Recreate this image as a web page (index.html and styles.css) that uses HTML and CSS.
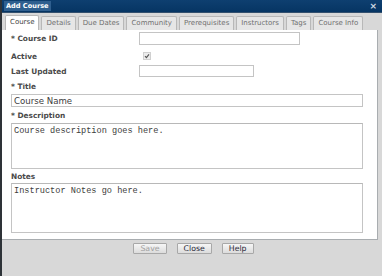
FILE: index.html
```html
<!DOCTYPE html>
<html lang="en">
<head>
    <meta charset="UTF-8">
    <title>Add Course</title>
    <link rel="stylesheet" href="styles.css">
</head>
<body>

    <div class="dialog">
        <div class="titlebar">
            <span class="title">Add Course</span>
            <span class="close">&times;</span>
        </div>

        <!-- tab strip -->
        <div class="tabs">
            <div class="tab active">Course</div>
            <div class="tab">Details</div>
            <div class="tab">Due Dates</div>
            <div class="tab">Community</div>
            <div class="tab">Prerequisites</div>
            <div class="tab">Instructors</div>
            <div class="tab">Tags</div>
            <div class="tab">Course Info</div>
        </div>

        <div class="panel">
            <div class="row row-id">
                <label class="label">* Course ID</label>
                <input type="text" class="field field-id">
            </div>
            <div class="row row-active">
                <label class="label">Active</label>
                <span class="check">
                    <svg width="6" height="6" viewBox="0 0 6 6"><path d="M1 3.2 L2.4 4.6 L5 1.4" fill="none" stroke="#555" stroke-width="1.1"/></svg>
                </span>
            </div>
            <div class="row row-updated">
                <label class="label">Last Updated</label>
                <input type="text" class="field field-date">
            </div>

            <div class="label block title-label">* Title</div>
            <input type="text" class="field field-wide" value="Course Name">

            <div class="label block desc-label">* Description</div>
            <textarea class="area area-desc">Course description goes here.</textarea>

            <div class="label block notes-label">Notes</div>
            <textarea class="area area-notes">Instructor Notes go here.</textarea>
        </div>

        <div class="buttons">
            <button class="btn" disabled>Save</button>
            <button class="btn">Close</button>
            <button class="btn">Help</button>
        </div>
    </div>

</body>
</html>
```

FILE: styles.css
```css
body {
    margin: 0;
    font-family: "DejaVu Sans", Verdana, sans-serif;
    background-color: #d8d8d8;
}

.dialog {
    width: 380px;
    height: 276px;
    border-left: 2px solid #2e3338;
    background-color: #d8d8d8;
}

.titlebar {
    height: 13px;
    background: linear-gradient(#0e3f70, #063563);
    border-bottom: 1px solid #33506e;
    box-sizing: border-box;
    display: flex;
    align-items: center;
    justify-content: space-between;
    padding: 0 5px 0 2px;
}

.title {
    color: #fff;
    font-weight: bold;
    font-size: 6.6px;
    background-color: #2f5f8f; /* selected-looking title */
    padding: 1px 2px;
    line-height: 8px;
}

.close {
    color: #cfd8e2;
    font-size: 9px;
    line-height: 9px;
    font-weight: bold;
}

.tabs {
    height: 17px;
    display: flex;
    align-items: flex-end;
    padding-left: 3px;
    box-sizing: border-box;
}

.tab {
    height: 13px;
    line-height: 12px;
    font-size: 7px;
    color: #707070;
    background-color: #e6e6e6;
    border: 1px solid #b8b8b8;
    border-bottom: none;
    border-radius: 2px 2px 0 0;
    padding: 0 4px;
    margin-right: 2px;
}

.tab.active {
    height: 14px;
    color: #444;
    background-color: #fff;
}

.panel {
    width: 376px;
    height: 210px;
    background-color: #fff;
    border-right: 1px solid #a9adb0;
    border-bottom: 1px solid #a9adb0;
    padding: 2px 0 0 9px;
    box-sizing: border-box;
}

.row {
    display: flex;
    align-items: center;
}

.label {
    font-size: 7.4px;
    font-weight: bold;
    color: #4a4a4a;
    width: 128px;
}

.block {
    height: 10px;
    line-height: 10px;
}

.row-id {
    height: 13px;
}

.row-active {
    height: 14px;
    margin-top: 4px;
}

.row-updated {
    height: 12px;
    margin-top: 2px;
}

.field {
    box-sizing: border-box;
    border: 1px solid #c4c4c4;
    padding: 0 2px;
    margin: 0;
    font-family: "DejaVu Sans", Verdana, sans-serif;
    font-size: 8.6px;
    color: #3c3c3c;
    outline: none;
}

.field-id {
    width: 161px;
    height: 13px;
}

.field-date {
    width: 115px;
    height: 12px;
}

.check {
    width: 6px;
    height: 6px;
    margin-left: 4px;
    background-color: #ececec;
    border: 1px solid #d0d0d0;
    display: flex;
}

.title-label {
    margin-top: 5px;
}

.field-wide {
    display: block;
    width: 352px;
    height: 13px;
    margin-top: 2px;
}

.desc-label {
    margin-top: 4px;
}

.notes-label {
    margin-top: 3px;
}

.area {
    display: block;
    box-sizing: border-box;
    width: 352px;
    border: 1px solid #c4c4c4;
    border-top-color: #b8b8b8;
    padding: 2px 2px;
    margin: 0;
    resize: none;
    font-family: "Liberation Mono", "Courier New", monospace;
    font-size: 8.6px;
    line-height: 10px;
    color: #3c3c3c;
    outline: none;
}

.area-desc {
    height: 46px;
    margin-top: 2px;
}

.area-notes {
    height: 50px;
    margin-top: 1px;
}

.buttons {
    display: flex;
    justify-content: center;
    gap: 10px;
    padding-top: 3px;
    padding-left: 3px;
}

.btn {
    height: 11px;
    font-family: "DejaVu Sans", Verdana, sans-serif;
    font-size: 7.8px;
    line-height: 9px;
    padding: 0 6px;
    color: #2a2a3a;
    background: linear-gradient(#f6f6f6, #dcdcdc);
    border: 1px solid #a8a8a8;
    border-radius: 1px;
}

.btn:disabled {
    color: #a0a0a0;
}
```
